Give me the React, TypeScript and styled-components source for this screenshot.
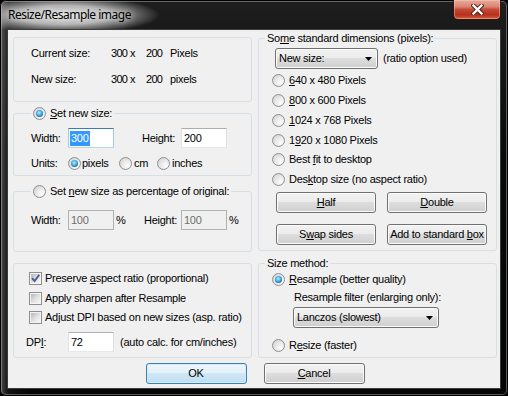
import React from "react";
import styled, { createGlobalStyle, css } from "styled-components";

const GlobalStyle = createGlobalStyle`
  html, body { margin: 0; padding: 0; background: #000; }
  #root { width: 508px; height: 396px; }
`;

const Window = styled.div`
  width: 508px;
  height: 396px;
  box-sizing: border-box;
  padding: 0 7px 7px;
  display: flex;
  flex-direction: column;
  border-radius: 6px;
  background:
    radial-gradient(ellipse 96px 19px at 64px 15px, rgba(230, 230, 230, 0.97) 0%, rgba(205, 205, 205, 0.85) 50%, rgba(150, 150, 150, 0) 100%),
    linear-gradient(to right, rgba(140, 140, 140, 0.55) 0px, rgba(60, 60, 60, 0.25) 8px, rgba(0, 0, 0, 0) 30px),
    linear-gradient(to bottom, #1e1e1e, #090909 40%, #050505);
  box-shadow: inset 0 0 0 1px #000, inset 0 0 0 2px rgba(190, 190, 190, 0.45);
`;

const TitleBar = styled.div`
  height: 29px;
  flex: none;
  display: flex;
  align-items: flex-start;
  justify-content: space-between;
`;

const TitleText = styled.div`
  margin: 7px 0 0 1px;
  font-family: "Noto Sans", "Open Sans", sans-serif;
  font-size: 12px;
  line-height: 16px;
  letter-spacing: -0.5px;
  color: #000;
  text-shadow: 0 0 6px rgba(255, 255, 255, 0.9);
`;

const CloseButton = styled.div`
  width: 48px;
  height: 20px;
  box-sizing: border-box;
  border: 1px solid #3b0f0a;
  border-top: none;
  border-radius: 0 0 5px 5px;
  background: linear-gradient(#e8ab9a 0%, #d98571 35%, #c44a35 50%, #b5301c 78%, #d0603f 100%);
  box-shadow: inset 0 0 0 1px rgba(255, 205, 195, 0.45);
  display: grid;
  place-items: center;
`;

const Client = styled.div`
  flex: 1;
  display: flex;
  flex-direction: column;
  background: #f0f0f0;
  border: 1px solid #3c3c3c;
  padding: 0 3px 4px 5px;
  font-family: "Liberation Sans", Arial, sans-serif;
  font-size: 11px;
  line-height: 13px;
  letter-spacing: -0.25px;
  color: #000;
`;

const Columns = styled.div<{ $mt?: number }>`
  display: grid;
  grid-template-columns: 239px 239px;
  column-gap: 6px;
  align-items: start;
  margin-top: ${(p) => p.$mt ?? 0}px;
`;

const Stack = styled.div`
  display: flex;
  flex-direction: column;
`;

const Group = styled.fieldset<{ $mt?: number }>`
  margin: ${(p) => p.$mt ?? 0}px 0 0;
  padding: 0;
  min-width: 0;
  border: 1px solid #d5dfe5;
  border-radius: 3px;
`;

const Legend = styled.legend<{ $ml: number }>`
  margin-left: ${(p) => p.$ml}px;
  padding: 0 2px;
  height: 13px;
  line-height: 13px;
  display: flex;
  align-items: center;
  gap: 4px;
  white-space: nowrap;
`;

const GroupBody = styled.div<{ $pad: string }>`
  padding: ${(p) => p.$pad};
  display: flex;
  flex-direction: column;
  align-items: flex-start;
`;

const InfoGrid = styled.div`
  display: grid;
  grid-template-columns: 80px 19px 16px 24px auto;
  row-gap: 13px;
  white-space: nowrap;
`;

const Num = styled.span`
  letter-spacing: -0.7px;
`;

const Row = styled.div<{ $mt?: number; $ml?: number; $h?: number }>`
  display: flex;
  align-items: center;
  flex: none;
  height: ${(p) => p.$h ?? 13}px;
  margin-top: ${(p) => p.$mt ?? 0}px;
  margin-left: ${(p) => p.$ml ?? 0}px;
  white-space: nowrap;
`;

const FieldLabel = styled.span<{ $w?: number; $ml?: number }>`
  flex: none;
  width: ${(p) => (p.$w ? `${p.$w}px` : "auto")};
  margin-left: ${(p) => p.$ml ?? 0}px;
  white-space: nowrap;
`;

const U = styled.span`
  text-decoration: underline;
  text-underline-offset: 1px;
`;

const EditBox = styled.div<{ $state?: "normal" | "focus" | "disabled" }>`
  width: 46px;
  height: 20px;
  box-sizing: border-box;
  flex: none;
  border: 1px solid;
  border-color: #abadb3 #dbdfe6 #e3e9ef #e2e3ea;
  background: #fff;
  padding: 0 1px 0 2px;
  display: flex;
  align-items: center;
  ${(p) =>
    p.$state === "focus" &&
    css`
      border-color: #3d7bad #a4c9e3 #b7d9ed #a4c9e3;
      padding-left: 1px;
    `}
  ${(p) =>
    p.$state === "disabled" &&
    css`
      border-color: #adb2b5;
      background: #f0f0f0;
      color: #6d6d6d;
    `}
`;

const Selected = styled.span`
  background: #3399ff;
  color: #fff;
  line-height: 15px;
  padding: 0 1px;
`;

const Percent = styled.span`
  flex: none;
  width: 10px;
  margin-left: 2px;
`;

const Option = styled.div<{ $w?: number; $gap?: number; $mt?: number; $ml?: number }>`
  display: flex;
  align-items: center;
  flex: none;
  height: 13px;
  gap: ${(p) => p.$gap ?? 4}px;
  width: ${(p) => (p.$w ? `${p.$w}px` : "auto")};
  margin-top: ${(p) => p.$mt ?? 0}px;
  margin-left: ${(p) => p.$ml ?? 0}px;
  white-space: nowrap;
`;

const Radio = styled.span<{ $on?: boolean }>`
  width: 13px;
  height: 13px;
  box-sizing: border-box;
  flex: none;
  border-radius: 50%;
  border: 1px solid #8e8f8f;
  background: radial-gradient(circle at 72% 72%, #fdfdfd 0%, #ececec 40%, #cdcdcd 100%);
  display: grid;
  place-items: center;
  ${(p) =>
    p.$on &&
    css`
      &::after {
        content: "";
        width: 7px;
        height: 7px;
        border-radius: 50%;
        background: radial-gradient(circle at 45% 40%, #c2f0ff 0%, #49b3ee 40%, #1b63a5 78%, #1a4f86 100%);
      }
    `}
`;

const CheckBox = styled.span`
  width: 13px;
  height: 13px;
  box-sizing: border-box;
  flex: none;
  border: 1px solid #8e8f8f;
  padding: 1px;
  background: linear-gradient(135deg, #b3b7bd 0%, #e3e3e3 55%, #f7f7f7 100%) content-box, #f4f4f4;
  display: grid;
  place-items: center;
`;

const Combo = styled.div<{ $w: number; $ml?: number; $mt?: number }>`
  width: ${(p) => p.$w}px;
  height: 21px;
  box-sizing: border-box;
  flex: none;
  margin-left: ${(p) => p.$ml ?? 0}px;
  margin-top: ${(p) => p.$mt ?? 0}px;
  border: 1px solid #707070;
  border-radius: 3px;
  background: linear-gradient(#f2f2f2 0%, #ebebeb 49%, #dddddd 50%, #cfcfcf 100%);
  box-shadow: inset 0 0 0 1px #fbfbfb;
  display: flex;
  align-items: center;
  justify-content: space-between;
  padding: 0 5px 0 3px;
  white-space: nowrap;
`;

const ButtonGrid = styled.div`
  display: grid;
  grid-template-columns: 100px 100px;
  column-gap: 11px;
  row-gap: 11px;
  margin: 6px 0 0 4px;
`;

const PushButton = styled.div<{ $default?: boolean; $w?: number }>`
  width: ${(p) => p.$w ?? 100}px;
  height: 21px;
  box-sizing: border-box;
  border: 1px solid #707070;
  border-radius: 3px;
  background: linear-gradient(#f2f2f2 0%, #ebebeb 49%, #dddddd 50%, #cfcfcf 100%);
  box-shadow: inset 0 0 0 1px #fcfcfc;
  display: flex;
  align-items: center;
  justify-content: center;
  white-space: nowrap;
  ${(p) =>
    p.$default &&
    css`
      border-color: #3c7fb1;
      background: linear-gradient(#eef7fc 0%, #e2f0f9 49%, #cfe7f6 50%, #c0def2 100%);
      box-shadow: inset 0 0 0 1px #d2ecfa;
    `}
`;

const ButtonRow = styled.div`
  display: flex;
  justify-content: center;
  gap: 17px;
  margin-top: 5px;
`;

const Arrow = () => (
  <svg width="7" height="4" viewBox="0 0 7 4">
    <path d="M0 0 H7 L3.5 4 Z" fill="#000" />
  </svg>
);

const CloseGlyph = () => (
  <svg width="13" height="11" viewBox="0 0 13 11">
    <path d="M2.5 1.5 L10.5 9.5 M10.5 1.5 L2.5 9.5" stroke="#4a1a12" strokeWidth="4.2" strokeLinecap="square" />
    <path d="M2.5 1.5 L10.5 9.5 M10.5 1.5 L2.5 9.5" stroke="#fff" strokeWidth="2.4" strokeLinecap="square" />
  </svg>
);

const CheckGlyph = () => (
  <svg width="9" height="9" viewBox="0 0 9 9" style={{ overflow: "visible" }}>
    <path d="M1 4.2 L3.6 7 L8.3 0.8" fill="none" stroke="#4a5c90" strokeWidth="1.9" />
  </svg>
);

export default function App() {
  return (
    <>
      <GlobalStyle />
      <Window>
        <TitleBar>
          <TitleText>Resize/Resample image</TitleText>
          <CloseButton>
            <CloseGlyph />
          </CloseButton>
        </TitleBar>
        <Client>
          <Columns>
            <Stack>
              <Group $mt={7}>
                <GroupBody $pad="9px 0 15px 17px">
                  <InfoGrid>
                    <span>Current size:</span>
                    <Num>300</Num>
                    <span>x</span>
                    <Num>200</Num>
                    <span>Pixels</span>
                    <span>New size:</span>
                    <Num>300</Num>
                    <span>x</span>
                    <Num>200</Num>
                    <span>pixels</span>
                  </InfoGrid>
                </GroupBody>
              </Group>

              <Group $mt={5}>
                <Legend $ml={17}>
                  <Radio $on />
                  <span>
                    <U>S</U>et new size:
                  </span>
                </Legend>
                <GroupBody $pad="8px 0 5px 17px">
                  <Row $h={20}>
                    <FieldLabel $w={37}>Width:</FieldLabel>
                    <EditBox $state="focus">
                      <Selected>300</Selected>
                    </EditBox>
                    <FieldLabel $w={39} $ml={28}>
                      Height:
                    </FieldLabel>
                    <EditBox>200</EditBox>
                  </Row>
                  <Row $mt={9}>
                    <FieldLabel $w={37}>Units:</FieldLabel>
                    <Option $w={51} $gap={1}>
                      <Radio $on />
                      <span>pixels</span>
                    </Option>
                    <Option $w={38} $gap={2}>
                      <Radio />
                      <span>cm</span>
                    </Option>
                    <Option $gap={2}>
                      <Radio />
                      <span>inches</span>
                    </Option>
                  </Row>
                </GroupBody>
              </Group>

              <Group $mt={9}>
                <Legend $ml={17}>
                  <Radio />
                  <span>
                    Set <U>n</U>ew size as percentage of original:
                  </span>
                </Legend>
                <GroupBody $pad="12px 0 21px 17px">
                  <Row $h={20}>
                    <FieldLabel $w={37}>Width:</FieldLabel>
                    <EditBox $state="disabled">100</EditBox>
                    <Percent>%</Percent>
                    <FieldLabel $w={37} $ml={18}>
                      Height:
                    </FieldLabel>
                    <EditBox $state="disabled">100</EditBox>
                    <Percent>%</Percent>
                  </Row>
                </GroupBody>
              </Group>
            </Stack>

            <Group $mt={2}>
              <Legend $ml={6}>
                <span>
                  So<U>m</U>e standard dimensions (pixels):
                </span>
              </Legend>
              <GroupBody $pad="3px 0 5px 13px">
                <Row $h={21} $ml={3}>
                  <Combo $w={103}>
                    <span>New size:</span>
                    <Arrow />
                  </Combo>
                  <FieldLabel $ml={5}>(ratio option used)</FieldLabel>
                </Row>
                <Option $mt={5}>
                  <Radio />
                  <span>
                    <U>6</U>40 x 480 Pixels
                  </span>
                </Option>
                <Option $mt={7}>
                  <Radio />
                  <span>
                    <U>8</U>00 x 600 Pixels
                  </span>
                </Option>
                <Option $mt={7}>
                  <Radio />
                  <span>
                    <U>1</U>024 x 768 Pixels
                  </span>
                </Option>
                <Option $mt={7}>
                  <Radio />
                  <span>
                    1<U>9</U>20 x 1080 Pixels
                  </span>
                </Option>
                <Option $mt={6}>
                  <Radio />
                  <span>
                    Best <U>f</U>it to desktop
                  </span>
                </Option>
                <Option $mt={7}>
                  <Radio />
                  <span>
                    Des<U>k</U>top size (no aspect ratio)
                  </span>
                </Option>
                <ButtonGrid>
                  <PushButton>
                    <span>
                      <U>H</U>alf
                    </span>
                  </PushButton>
                  <PushButton>
                    <span>
                      <U>D</U>ouble
                    </span>
                  </PushButton>
                  <PushButton>
                    <span>
                      S<U>w</U>ap sides
                    </span>
                  </PushButton>
                  <PushButton>
                    <span>
                      Add to standard <U>b</U>ox
                    </span>
                  </PushButton>
                </ButtonGrid>
              </GroupBody>
            </Group>
          </Columns>

          <Columns $mt={5}>
            <Group $mt={6}>
              <GroupBody $pad="8px 0 5px 15px">
                <Option $gap={3}>
                  <CheckBox>
                    <CheckGlyph />
                  </CheckBox>
                  <span>
                    Preserve <U>a</U>spect ratio (proportional)
                  </span>
                </Option>
                <Option $gap={3} $mt={7}>
                  <CheckBox />
                  <span>Apply sharpen after Resample</span>
                </Option>
                <Option $gap={3} $mt={6}>
                  <CheckBox />
                  <span>Adjust DPI based on new sizes (asp. ratio)</span>
                </Option>
                <Row $h={20} $mt={8} $ml={-3}>
                  <FieldLabel $w={42}>
                    DP<U>I</U>:
                  </FieldLabel>
                  <EditBox>72</EditBox>
                  <FieldLabel $ml={6}>(auto calc. for cm/inches)</FieldLabel>
                </Row>
              </GroupBody>
            </Group>

            <Group>
              <Legend $ml={6}>
                <span>Size method:</span>
              </Legend>
              <GroupBody $pad="3px 0 5px 13px">
                <Option>
                  <Radio $on />
                  <span>
                    <U>R</U>esample (better quality)
                  </span>
                </Option>
                <Row $mt={5} $ml={22}>
                  Resample filter (enlarging only):
                </Row>
                <Combo $w={146} $ml={21} $mt={3}>
                  <span>Lanczos (slowest)</span>
                  <Arrow />
                </Combo>
                <Option $mt={11}>
                  <Radio />
                  <span>
                    R<U>e</U>size (faster)
                  </span>
                </Option>
              </GroupBody>
            </Group>
          </Columns>

          <ButtonRow>
            <PushButton $default $w={101}>
              <span>OK</span>
            </PushButton>
            <PushButton $w={101}>
              <span>
                <U>C</U>ancel
              </span>
            </PushButton>
          </ButtonRow>
        </Client>
      </Window>
    </>
  );
}
